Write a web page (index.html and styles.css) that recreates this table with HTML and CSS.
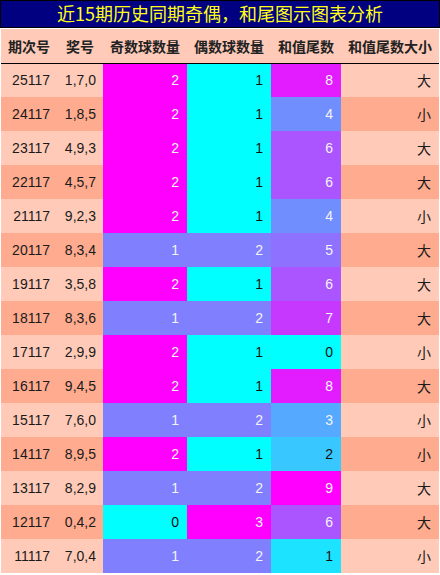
FILE: index.html
```html
<!DOCTYPE html>
<html lang="zh-CN">
<head>
    <meta charset="UTF-8">
    <title>近15期历史同期奇偶，和尾图示图表分析</title>
    <link rel="stylesheet" href="styles.css">
</head>
<body>
    <div class="title">近15期历史同期奇偶，和尾图示图表分析</div>
    <table class="grid">
        <thead>
            <tr>
                <th class="c-qi">期次号</th>
                <th class="c-jh">奖号</th>
                <th class="c-odd">奇数球数量</th>
                <th class="c-even">偶数球数量</th>
                <th class="c-tail">和值尾数</th>
                <th class="c-size">和值尾数大小</th>
            </tr>
        </thead>
        <tbody>
            <tr><td>25117</td><td>1,7,0</td><td class="num hi">2</td><td class="num lo">1</td><td class="num t8">8</td><td class="sz">大</td></tr>
            <tr><td>24117</td><td>1,8,5</td><td class="num hi">2</td><td class="num lo">1</td><td class="num t4">4</td><td class="sz">小</td></tr>
            <tr><td>23117</td><td>4,9,3</td><td class="num hi">2</td><td class="num lo">1</td><td class="num t6">6</td><td class="sz">大</td></tr>
            <tr><td>22117</td><td>4,5,7</td><td class="num hi">2</td><td class="num lo">1</td><td class="num t6">6</td><td class="sz">大</td></tr>
            <tr><td>21117</td><td>9,2,3</td><td class="num hi">2</td><td class="num lo">1</td><td class="num t4">4</td><td class="sz">小</td></tr>
            <tr><td>20117</td><td>8,3,4</td><td class="num mid">1</td><td class="num mid">2</td><td class="num t5">5</td><td class="sz">大</td></tr>
            <tr><td>19117</td><td>3,5,8</td><td class="num hi">2</td><td class="num lo">1</td><td class="num t6">6</td><td class="sz">大</td></tr>
            <tr><td>18117</td><td>8,3,6</td><td class="num mid">1</td><td class="num mid">2</td><td class="num t7">7</td><td class="sz">大</td></tr>
            <tr><td>17117</td><td>2,9,9</td><td class="num hi">2</td><td class="num lo">1</td><td class="num t0">0</td><td class="sz">小</td></tr>
            <tr><td>16117</td><td>9,4,5</td><td class="num hi">2</td><td class="num lo">1</td><td class="num t8">8</td><td class="sz">大</td></tr>
            <tr><td>15117</td><td>7,6,0</td><td class="num mid">1</td><td class="num mid">2</td><td class="num t3">3</td><td class="sz">小</td></tr>
            <tr><td>14117</td><td>8,9,5</td><td class="num hi">2</td><td class="num lo">1</td><td class="num t2">2</td><td class="sz">小</td></tr>
            <tr><td>13117</td><td>8,2,9</td><td class="num mid">1</td><td class="num mid">2</td><td class="num t9">9</td><td class="sz">大</td></tr>
            <tr><td>12117</td><td>0,4,2</td><td class="num lo">0</td><td class="num hi">3</td><td class="num t6">6</td><td class="sz">大</td></tr>
            <tr><td>11117</td><td>7,0,4</td><td class="num mid">1</td><td class="num mid">2</td><td class="num t1">1</td><td class="sz">小</td></tr>
        </tbody>
    </table>
</body>
</html>
```

FILE: styles.css
```css
* {
    margin: 0;
    padding: 0;
    box-sizing: border-box;
}
body {
    width: 440px;
    background: #fff;
    color: #1a1a1a;
    font-family: "Liberation Sans", Arial, "Noto Sans CJK SC", sans-serif;
    font-size: 14px;
}
.title {
    height: 28px;
    width: 440px;
    border: 1px solid #000;
    background: #000080;
    color: #ffff1a;
    font-family: "Noto Sans CJK SC", sans-serif;
    font-size: 18px;
    line-height: 25px;
    text-align: center;
}
.grid {
    margin: 1px 1px 0 1px;
    width: 438px;
    border-collapse: collapse;
    table-layout: fixed;
}
.grid th {
    height: 34px;
    background: #ffcbb8;
    border-bottom: 1px solid #000;
    font-family: "Noto Sans CJK SC", sans-serif;
    font-size: 14px;
    font-weight: bold;
    color: #222;
    text-align: center;
}
.c-qi { width: 56px; }
.c-jh { width: 46px; }
.c-odd { width: 84px; }
.c-even { width: 84px; }
.c-tail { width: 70px; }
.c-size { width: 98px; }

.grid td {
    height: 34px;
    padding-right: 7px;
    text-align: right;
    background: #ffcbb8;
}
.grid tbody tr:nth-child(even) td:not(.num) {
    background: #ffab8f;
}
.grid td.num {
    padding-right: 8px;
    color: #f4f4f4;
}
.grid td.sz {
    padding-right: 8px;
    font-family: "Noto Sans CJK SC", sans-serif;
}

/* colour scale: cyan (low) to magenta (high) */
.grid td.lo { background: #00ffff; color: #111; }
.grid td.mid { background: #8080ff; }
.grid td.hi { background: #ff00ff; }

.grid td.t0 { background: #00ffff; color: #111; }
.grid td.t1 { background: #1ce3ff; color: #111; }
.grid td.t2 { background: #38c7ff; color: #111; }
.grid td.t3 { background: #55aaff; }
.grid td.t4 { background: #718eff; }
.grid td.t5 { background: #8e71ff; }
.grid td.t6 { background: #aa55ff; }
.grid td.t7 { background: #c738ff; }
.grid td.t8 { background: #e31cff; }
.grid td.t9 { background: #ff00ff; }
```
